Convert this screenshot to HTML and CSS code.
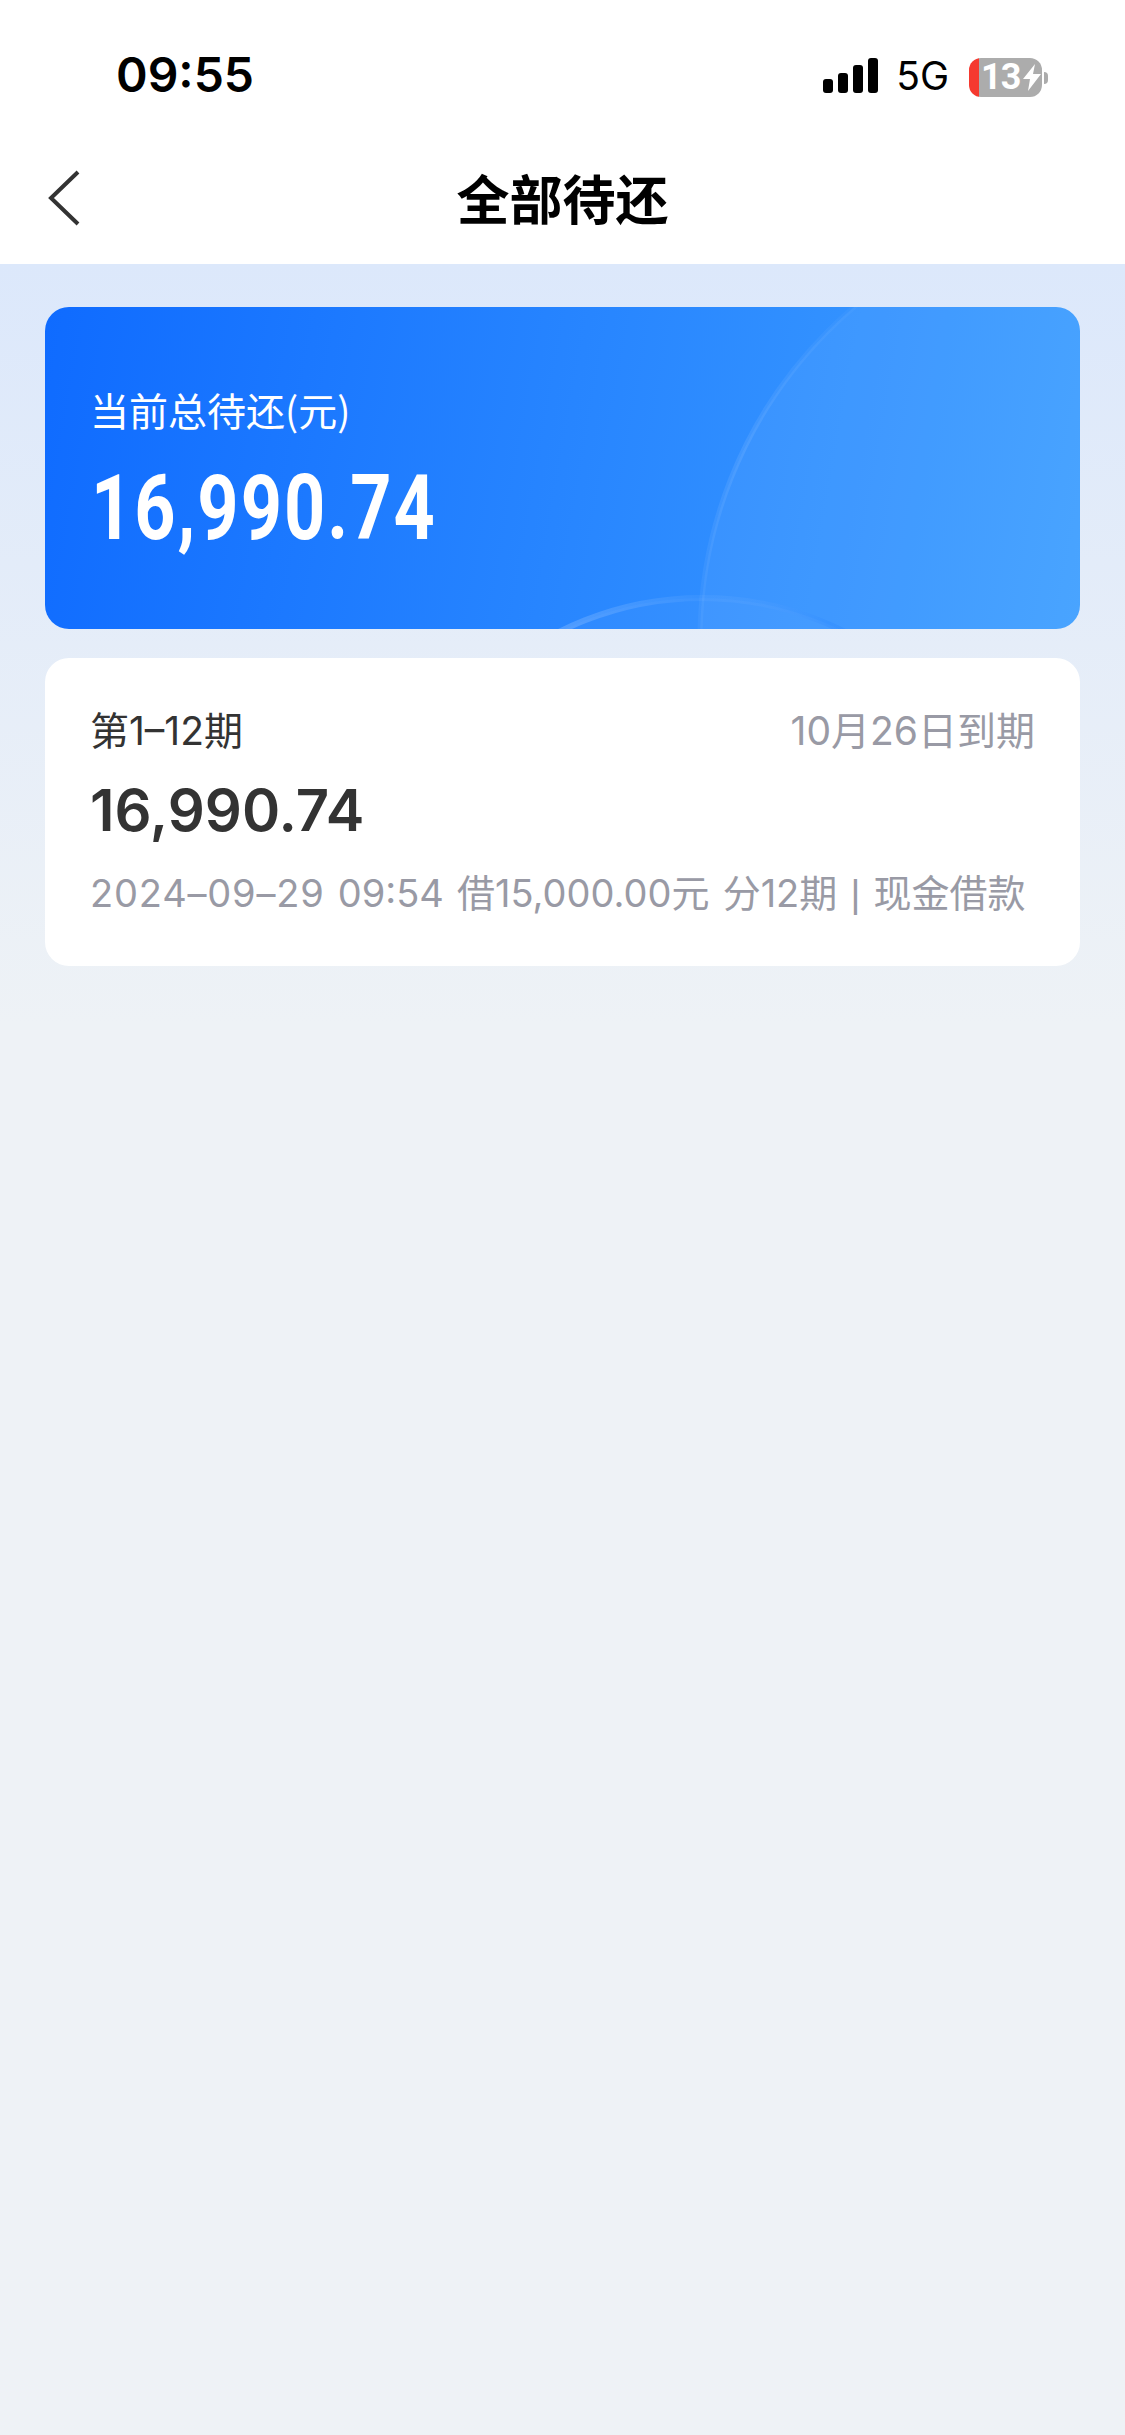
FILE: index.html
```html
<!DOCTYPE html>
<html lang="zh-CN">

<head>
    <meta charset="UTF-8">
    <meta name="viewport" content="width=device-width, initial-scale=1.0">
    <title>全部待还</title>
    <link rel="stylesheet" href="styles.css">
</head>

<body>
    <div class="header">
        <div class="status">
            <span class="time">09:55</span>
            <div class="status-right">
                <div class="signal">
                    <i class="bar bar1"></i>
                    <i class="bar bar2"></i>
                    <i class="bar bar3"></i>
                    <i class="bar bar4"></i>
                </div>
                <span class="net">5G</span>
                <div class="battery">
                    <div class="battery-body">
                        <span class="battery-num">13</span>
                        <svg class="bolt" viewBox="0 0 18 27" width="18" height="27">
                            <path d="M12 0 L0 15 H7 L5 27 L18 10 H10 Z" fill="#fff" />
                        </svg>
                    </div>
                    <i class="battery-nub"></i>
                </div>
            </div>
        </div>
        <div class="nav">
            <svg class="back" viewBox="0 0 34 58" width="34" height="58">
                <path d="M31 3 L4 29 L31 55" fill="none" stroke="#333" stroke-width="4" />
            </svg>
            <h1 class="title">全部待还</h1>
        </div>
    </div>

    <div class="content">
        <div class="total">
            <svg class="total-bg" viewBox="0 0 1035 322" width="1035" height="322">
                <defs>
                    <linearGradient id="ringBig" x1="0" y1="0" x2="0" y2="1">
                        <stop offset="0.1" stop-color="#fff" stop-opacity="0.02" />
                        <stop offset="0.28" stop-color="#fff" stop-opacity="0.09" />
                        <stop offset="0.62" stop-color="#fff" stop-opacity="0" />
                    </linearGradient>
                    <linearGradient id="ringSmall" x1="0" y1="0" x2="1" y2="0">
                        <stop offset="0.25" stop-color="#fff" stop-opacity="0.2" />
                        <stop offset="0.5" stop-color="#fff" stop-opacity="0.04" />
                        <stop offset="0.7" stop-color="#0a6cff" stop-opacity="0.12" />
                    </linearGradient>
                </defs>
                <circle cx="1092" cy="333" r="437" fill="#fff" fill-opacity="0.055" stroke="url(#ringBig)" stroke-width="5" />
                <circle cx="657" cy="609" r="318" fill="#fff" fill-opacity="0.03" stroke="url(#ringSmall)" stroke-width="6" />
            </svg>
            <p class="total-label">当前总待还(元)</p>
            <p class="total-num">16,990.74</p>
        </div>

        <div class="card">
            <div class="card-top">
                <span class="period">第1–12期</span>
                <span class="due">10月26日到期</span>
            </div>
            <p class="amount">16,990.74</p>
            <p class="meta"><span class="date">2024–09–29</span> 09:54 借15,000.00元 分12期 <span class="sep">|</span> 现金借款</p>
        </div>
    </div>
</body>

</html>
```

FILE: styles.css
```css
* {
    box-sizing: border-box;
}

html,
body {
    height: 100%;
}

body {
    margin: 0;
    padding: 0;
    display: flex;
    flex-direction: column;
    font-family: "Inter", "Noto Sans CJK SC", sans-serif;
    background-color: #eef2f6;
}

p,
h1 {
    margin: 0;
}

.header {
    height: 264px;
    background-color: #fff;
}

.status {
    height: 130px;
    padding: 45px 77px 0 116px;
    display: flex;
    justify-content: space-between;
    align-items: flex-start;
}

.time {
    font-family: "Inter", sans-serif;
    font-size: 48px;
    font-weight: 600;
    line-height: 60px;
    color: #000;
}

.status-right {
    display: flex;
    align-items: flex-end;
    height: 50px;
    margin-top: 6px;
}

.signal {
    display: flex;
    align-items: flex-end;
    gap: 5px;
    height: 36px;
    margin-bottom: 8px;
}

.bar {
    display: block;
    width: 10px;
    background-color: #000;
    border-radius: 3px;
}

.bar1 {
    height: 14px;
}

.bar2 {
    height: 20px;
}

.bar3 {
    height: 28px;
}

.bar4 {
    height: 35px;
}

.net {
    margin-left: 18px;
    font-family: "Inter", sans-serif;
    font-size: 39px;
    line-height: 50px;
    color: #000;
}

.battery {
    display: flex;
    align-items: center;
    margin-left: 20px;
    margin-bottom: 4px;
}

.battery-body {
    width: 73px;
    height: 39px;
    padding-left: 12px;
    display: flex;
    align-items: center;
    gap: 3px;
    border-radius: 12px;
    background: linear-gradient(90deg, #f5392f 10px, #acacac 10px);
}

.battery-num {
    font-family: "Roboto", sans-serif;
    font-size: 36px;
    font-weight: 700;
    line-height: 39px;
    letter-spacing: -1px;
    color: #fff;
}

.battery-nub {
    display: block;
    width: 4px;
    height: 12px;
    margin-left: 2px;
    background-color: #acacac;
    border-radius: 0 4px 4px 0;
}

.nav {
    position: relative;
    height: 134px;
    display: flex;
    align-items: center;
    justify-content: center;
}

.back {
    position: absolute;
    left: 47px;
    top: 39px;
}

.title {
    font-size: 53px;
    font-weight: 700;
    line-height: 70px;
    color: #000;
    font-family: "Noto Sans CJK SC", sans-serif;
}

.content {
    flex: 1;
    padding: 43px 45px 0;
    display: flex;
    flex-direction: column;
    gap: 29px;
    background: linear-gradient(180deg, #dce8fb 0, #eef2f6 760px);
}

.total {
    position: relative;
    overflow: hidden;
    height: 322px;
    padding: 75px 45px 0;
    border-radius: 24px;
    color: #fff;
    background: linear-gradient(100deg, #0f6bff 0%, #3f9fff 100%);
}

.total-bg {
    position: absolute;
    left: 0;
    top: 0;
}

.total-label {
    position: relative;
    font-family: "Noto Sans CJK SC", sans-serif;
    font-size: 39px;
    line-height: 54px;
}

.total-num {
    position: relative;
    margin-top: 23px;
    margin-left: 1px;
    font-family: "Roboto", sans-serif;
    font-size: 90px;
    font-weight: 700;
    line-height: 100px;
    letter-spacing: 2.5px;
    transform: scaleX(0.8);
    transform-origin: left;
}

.card {
    height: 308px;
    padding: 46px 45px 0;
    border-radius: 24px;
    background-color: #fff;
}

.card-top {
    display: flex;
    justify-content: space-between;
    font-size: 39px;
    line-height: 54px;
}

.period {
    color: #333;
}

.due {
    color: #999aa5;
}

.amount {
    margin-top: 14px;
    font-family: "Inter", sans-serif;
    font-size: 58px;
    font-weight: 600;
    line-height: 76px;
    color: #333;
}

.meta {
    margin-top: 18px;
    font-size: 38px;
    line-height: 54px;
    word-spacing: 2.5px;
    white-space: nowrap;
    color: #999aa5;
}

.date {
    letter-spacing: 0.8px;
}

.sep {
    font-family: "Liberation Sans", sans-serif;
}
```
